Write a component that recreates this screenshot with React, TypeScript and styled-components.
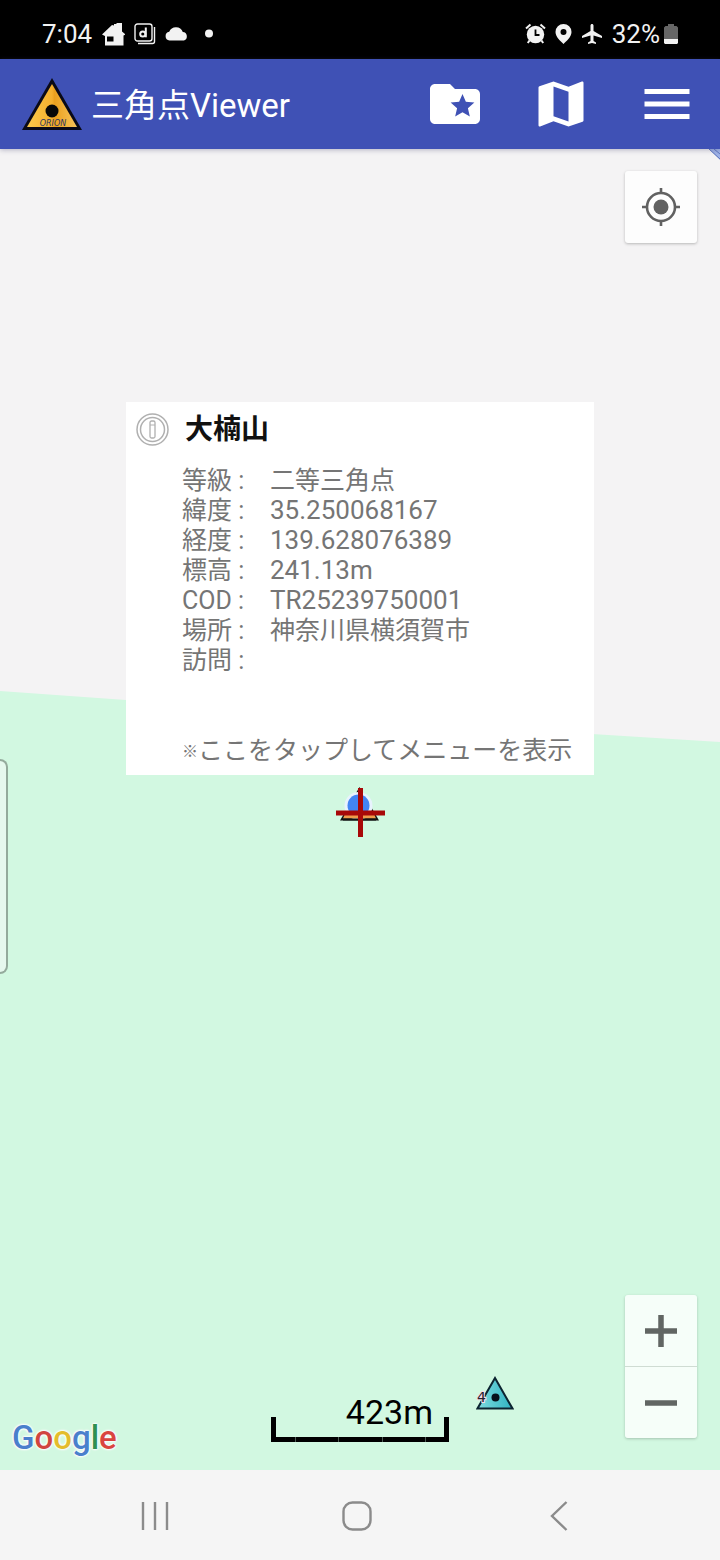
import React from "react";
import styled, { createGlobalStyle } from "styled-components";

const GlobalStyle = createGlobalStyle`
  * { box-sizing: border-box; }
  body {
    margin: 0;
    background: #f5f5f5;
    font-family: Roboto, "Noto Sans CJK JP", sans-serif;
  }
  button {
    margin: 0;
    padding: 0;
    border: 0;
    background: none;
    font: inherit;
    cursor: pointer;
  }
  svg { display: block; flex: none; }
`;

const Screen = styled.div`
  display: flex;
  flex-direction: column;
  min-height: 100vh;
`;

const StatusBar = styled.div`
  display: flex;
  align-items: center;
  justify-content: space-between;
  height: 59px;
  padding: 8px 42px 0 42px;
  background: #000;
  color: #f2f2f2;
  font-size: 26px;
  line-height: 30px;
`;

const StatusGroup = styled.div`
  display: flex;
  align-items: center;
  gap: 9px;
`;

const BatteryGroup = styled.span`
  display: flex;
  align-items: center;
  gap: 4px;
`;

const AppBar = styled.header`
  position: relative;
  z-index: 1;
  display: flex;
  align-items: center;
  height: 90px;
  padding: 0 23px 0 22px;
  background: #3f51b5;
  color: #fff;
  box-shadow: 0 1px 5px rgba(60, 60, 110, 0.35);
`;

const AppTitle = styled.h1`
  margin: 0 0 0 8px;
  padding-top: 4px;
  flex: 1;
  font-size: 33px;
  font-weight: 400;
  line-height: 40px;
  white-space: nowrap;
`;

const Actions = styled.div`
  display: flex;
  gap: 46px;
`;

const MapArea = styled.main`
  position: relative;
  flex: 1;
  min-height: 900px;
  overflow: hidden;
  background: #f5f5f5;
`;

const Terrain = styled.svg`
  position: absolute;
  inset: 0;
  width: 100%;
  height: 100%;
`;

const CornerRibbon = styled.svg`
  position: absolute;
  top: 0;
  right: 0;
`;

const MapPin = styled.div<{ $x: string; $y: string }>`
  position: absolute;
  left: ${(p) => p.$x};
  top: ${(p) => p.$y};
  transform: translate(-50%, -50%);
`;

const InfoWindow = styled.section`
  position: absolute;
  left: 50%;
  bottom: calc(50% + 35px);
  transform: translateX(-50%);
  width: 468px;
  padding: 8px 10px 9px;
  background: #fff;
  color: #757575;
  font-size: 25px;
  line-height: 30px;
  cursor: pointer;
`;

const InfoHeader = styled.div`
  display: flex;
  align-items: center;
  gap: 16px;
  height: 40px;
  margin-bottom: 16px;
`;

const InfoTitle = styled.h2`
  margin: 0;
  color: #111;
  font-size: 28px;
  font-weight: 700;
  line-height: 40px;
`;

const InfoList = styled.dl`
  display: grid;
  grid-template-columns: 88px 1fr;
  grid-auto-rows: 30px;
  margin: 0 0 60px 46px;
`;

const InfoLabel = styled.dt`
  white-space: nowrap;
`;

const InfoValue = styled.dd<{ $numeric?: boolean }>`
  margin: 0;
  font-size: ${(p) => (p.$numeric ? 26 : 25)}px;
  line-height: ${(p) => (p.$numeric ? 28 : 30)}px;
  white-space: nowrap;
`;

const InfoHint = styled.p`
  margin: 0 0 0 46px;
  white-space: nowrap;
  height: 30px;
`;

const NoteMark = styled.span`
  font-size: 16px;
  vertical-align: 2px;
  line-height: 1;
`;

const MapButton = styled.button`
  display: grid;
  place-items: center;
  width: 72px;
  height: 72px;
  color: #666;
`;

const LocateButton = styled(MapButton)`
  position: absolute;
  top: 22px;
  right: 23px;
  border-radius: 3px;
  background: #fdfdfd;
  box-shadow: 0 1px 3px rgba(0, 0, 0, 0.25);
`;

const ZoomControls = styled.div`
  position: absolute;
  right: 23px;
  bottom: 32px;
  border-radius: 3px;
  background: rgba(255, 255, 255, 0.8);
  box-shadow: 0 1px 3px rgba(0, 0, 0, 0.22);

  button {
    height: 71px;
  }

  button + button {
    height: 72px;
    border-top: 1px solid #cfdcd3;
  }
`;

const EdgePanel = styled.button`
  position: absolute;
  left: 0;
  top: calc(50% - 51px);
  width: 8px;
  height: 215px;
  border: 2px solid #94aa9c;
  border-left: 0;
  border-radius: 0 8px 8px 0;
  background: #e6f8ee;
`;

const ScaleBar = styled.div`
  position: absolute;
  left: 50%;
  bottom: 28px;
  transform: translateX(-50%);
  width: 178px;
  color: #000;
  font-size: 34px;
  line-height: 40px;
`;

const ScaleText = styled.div`
  height: 25px;
  padding-right: 16px;
  text-align: right;
`;

const ScaleRule = styled.div`
  display: grid;
  grid-template-columns: 19px 1fr 1fr 1fr 19px;
  height: 25px;
  align-items: end;
  border: solid #000;
  border-width: 0 5px;

  span {
    height: 5px;
    background: #000;
  }

  span + span {
    border-left: 1px solid #4c5a51;
  }
`;

const Attribution = styled.a`
  position: absolute;
  left: 12px;
  bottom: 12px;
  font-family: Roboto, sans-serif;
  font-size: 33px;
  font-weight: 500;
  line-height: 40px;
  text-decoration: none;
  text-shadow: 0 0 2px #fff, 0 0 2px #fff, 0 0 3px #fff, 0 0 3px #fff;
`;

const Letter = styled.span<{ $color: string }>`
  color: ${(p) => p.$color};
`;

const NavBar = styled.nav`
  display: grid;
  grid-template-columns: repeat(3, 1fr);
  height: 90px;
  padding: 2px 60px 0 54px;
  background: #f5f5f5;
`;

const NavButton = styled.button`
  display: grid;
  place-items: center;
`;

const rows: { label: string; value: string; numeric?: boolean }[] = [
  { label: "等級", value: "二等三角点" },
  { label: "緯度", value: "35.250068167", numeric: true },
  { label: "経度", value: "139.628076389", numeric: true },
  { label: "標高", value: "241.13m", numeric: true },
  { label: "COD", value: "TR25239750001", numeric: true },
  { label: "場所", value: "神奈川県横須賀市" },
  { label: "訪問", value: "" },
];

const googleLetters: [string, string][] = [
  ["G", "#4a80cc"],
  ["o", "#d0453f"],
  ["o", "#e3bd2c"],
  ["g", "#4a80cc"],
  ["l", "#2f9150"],
  ["e", "#d9453f"],
];

const actions = [
  {
    name: "お気に入りフォルダ",
    path: "M20 6h-8l-2-2H4c-1.1 0-2 .9-2 2v12c0 1.1.9 2 2 2h16c1.1 0 2-.9 2-2V8c0-1.1-.9-2-2-2zm-2.06 11L15 15.28 12.06 17l.78-3.33-2.59-2.24 3.41-.29L15 8l1.34 3.14 3.41.29-2.59 2.24.78 3.33z",
  },
  {
    name: "地図",
    path: "M20.5 3l-.16.03L15 5.1 9 3 3.36 4.9c-.21.07-.36.25-.36.48V20.5c0 .28.22.5.5.5l.16-.03L9 18.9l6 2.1 5.64-1.9c.21-.07.36-.25.36-.48V3.5c0-.28-.22-.5-.5-.5zM15 19l-6-2.11V5l6 2.11V19z",
  },
  { name: "メニュー", path: "M3 18h18v-2H3v2zm0-5h18v-2H3v2zm0-7v2h18V6H3z" },
];

function StatusIcons() {
  return (
    <>
      <svg width="24" height="24" viewBox="0 0 24 24" fill="#f2f2f2">
        <path
          fillRule="evenodd"
          d="M1 12.500 11 3l2 .5V2h2.500V1H21v8.500l3.500 3-2 1V23.500H4V14zM6 14.500v5h6.500v-5z"
        />
      </svg>
      <svg width="22" height="22" viewBox="0 0 22 22" fill="none" stroke="#f2f2f2">
        <rect x="1" y="1" width="17" height="17" rx="2.500" strokeWidth="1.400" />
        <path d="M20.500 4v14.500a2 2 0 0 1-2 2H4" strokeWidth="1.400" />
        <circle cx="8.800" cy="11" r="2.600" strokeWidth="2" />
        <path d="M11.800 4.500v9.800" strokeWidth="2" />
      </svg>
      <svg width="24" height="14" viewBox="0 0 24 14" fill="#f2f2f2">
        <path d="M4.500 13.500a4.400 4.400 0 0 1-.3-8.700 7.300 7.300 0 0 1 13.600.2 4.400 4.400 0 0 1 1.200 8.500z" />
      </svg>
      <svg width="28" height="10" viewBox="0 0 28 10" fill="#f2f2f2">
        <circle cx="11" cy="4.500" r="4" />
      </svg>
    </>
  );
}

function TriangleLogo() {
  return (
    <svg width="61" height="54" viewBox="0 0 61 54" role="img" aria-label="ORION">
      <defs>
        <linearGradient id="gold" x1="0" x2="1">
          <stop offset="0" stopColor="#fbc94d" />
          <stop offset="0.5" stopColor="#f5b02e" />
          <stop offset="0.55" stopColor="#eba01e" />
          <stop offset="1" stopColor="#f7c45a" />
        </linearGradient>
      </defs>
      <path d="M30 1 60 53H0z" fill="#0a0a18" />
      <path d="M30 7 55 50H5z" fill="url(#gold)" />
      <circle cx="30" cy="34" r="6.500" fill="#080808" />
      <text
        x="31"
        y="49"
        textAnchor="middle"
        fontFamily="DejaVu Sans, sans-serif"
        fontStyle="italic"
        fontSize="8"
        fill="#2c365f"
      >
        ORION
      </text>
    </svg>
  );
}

export default function App() {
  return (
    <Screen>
      <GlobalStyle />
      <StatusBar>
        <StatusGroup>
          <span>7:04</span>
          <StatusIcons />
        </StatusGroup>
        <StatusGroup>
          <svg width="21" height="21" viewBox="0 0 21 21">
            <circle cx="10.500" cy="11.500" r="8.700" fill="#f2f2f2" />
            <path
              d="M1 5.500 5.500 1.500M20 5.500l-4.500-4M4.500 17.500 2.800 20M16.500 17.500l1.700 2.500"
              stroke="#f2f2f2"
              strokeWidth="2"
            />
            <path d="M10.500 6.500v5.500h4" fill="none" stroke="#000" strokeWidth="1.800" />
          </svg>
          <svg width="17" height="20" viewBox="0 0 17 20" fill="#f2f2f2">
            <path
              fillRule="evenodd"
              d="M8.500 0a8 8 0 0 1 8 8c0 5-5 9-8 12C5.500 17 .5 13 .5 8a8 8 0 0 1 8-8zm0 5a3 3 0 1 0 0 6 3 3 0 0 0 0-6z"
            />
          </svg>
          <svg width="22" height="22" viewBox="1 1 22 22" fill="#f2f2f2">
            <path d="M22 16v-2l-8.500-5V3.500c0-.83-.67-1.500-1.500-1.500s-1.500.67-1.500 1.500V9L2 14v2l8.500-2.500V19L8 20.500V22l4-1 4 1v-1.500L13.500 19v-5.500L22 16z" />
          </svg>
          <BatteryGroup>
            32%
            <svg width="14" height="20" viewBox="0 0 14 20">
              <path d="M4 0h6v2h2.500L14 3.500V15H0V3.500L1.500 2H4z" fill="#666" />
              <path d="M0 15h14v4l-1 1H1l-1-1z" fill="#f2f2f2" />
            </svg>
          </BatteryGroup>
        </StatusGroup>
      </StatusBar>

      <AppBar>
        <TriangleLogo />
        <AppTitle>三角点Viewer</AppTitle>
        <Actions>
          {actions.map((a) => (
            <button key={a.name} type="button" aria-label={a.name}>
              <svg width="60" height="60" viewBox="0 0 24 24" fill="#fff">
                <path d={a.path} />
              </svg>
            </button>
          ))}
        </Actions>
      </AppBar>

      <MapArea>
        <Terrain viewBox="0 0 720 1321" preserveAspectRatio="none" aria-hidden="true">
          <rect width="720" height="1321" fill="#f4f3f4" />
          <path d="M0 542 126 551 592 585 720 593V1321H0z" fill="#d2f8e1" />
        </Terrain>
        <CornerRibbon width="11" height="11" viewBox="0 0 11 11" aria-hidden="true">
          <path d="M0 0H11V11z" fill="#9fb2e6" />
          <path d="M0 0 11 10M5 0 11 5" stroke="#5f77bd" />
        </CornerRibbon>

        <LocateButton type="button" aria-label="現在地">
          <svg width="40" height="40" viewBox="0 0 40 40" fill="none" stroke="#616161">
            <circle cx="20" cy="20" r="14" strokeWidth="2.600" />
            <path d="M20 1v6M20 33v6M1 20h6M33 20h6" strokeWidth="2.600" />
            <circle cx="20" cy="20" r="7.500" fill="#616161" stroke="none" />
          </svg>
        </LocateButton>

        <EdgePanel type="button" aria-label="エッジパネル" />

        <InfoWindow>
          <InfoHeader>
            <svg width="33" height="33" viewBox="0 0 33 33" fill="none" stroke="#b0b0b0">
              <circle cx="16.500" cy="16.500" r="15.500" strokeWidth="1.500" />
              <circle cx="16.500" cy="16.500" r="12" strokeWidth="1.500" />
              <rect x="14" y="8" width="5" height="17" rx="1.500" strokeWidth="1.300" />
              <path d="M14 12h5" />
            </svg>
            <InfoTitle>大楠山</InfoTitle>
          </InfoHeader>
          <InfoList>
            {rows.map((r) => (
              <React.Fragment key={r.label}>
                <InfoLabel>{r.label} :</InfoLabel>
                <InfoValue $numeric={r.numeric}>{r.value}</InfoValue>
              </React.Fragment>
            ))}
          </InfoList>
          <InfoHint>
            <NoteMark>※</NoteMark>ここをタップしてメニューを表示
          </InfoHint>
        </InfoWindow>

        <MapPin $x="50%" $y="50%">
          <svg width="50" height="54" viewBox="0 0 50 54">
            <path d="M24.500 4 44 37.500H5z" fill="#111" />
            <path d="M24.500 9 39 34.500H10z" fill="#ef9a4a" />
            <circle cx="23.500" cy="23" r="14" fill="#e8f3fd" />
            <circle cx="23.500" cy="22.500" r="11" fill="#4285f4" />
            <path d="M9.500 32h30l1.500 3.500H8z" fill="#ef9a4a" />
            <path d="M8 36.500h33" stroke="#111" strokeWidth="2" />
            <path d="M25.500 5v49M1 30h49" stroke="#a80808" strokeWidth="5" />
          </svg>
        </MapPin>

        <MapPin $x="68.750%" $y="94.200%">
          <svg width="38" height="34" viewBox="0 0 38 34">
            <defs>
              <linearGradient id="teal" x1="0" x2="1">
                <stop offset="0" stopColor="#7fdce0" />
                <stop offset="1" stopColor="#2fb3c0" />
              </linearGradient>
            </defs>
            <path d="M19 2 36.500 32.500H1.500z" fill="url(#teal)" stroke="#0c2430" strokeWidth="2" />
            <circle cx="19.500" cy="21.500" r="4" fill="#06101c" />
            <text
              x="1"
              y="26"
              fontFamily="DejaVu Sans, sans-serif"
              fontSize="14"
              fill="#26202c"
              stroke="#f4dfe6"
              strokeWidth="2"
              paintOrder="stroke"
            >
              4
            </text>
          </svg>
        </MapPin>

        <ScaleBar>
          <ScaleText>423m</ScaleText>
          <ScaleRule>
            <span />
            <span />
            <span />
            <span />
            <span />
          </ScaleRule>
        </ScaleBar>

        <Attribution href="#google" aria-label="Google">
          {googleLetters.map(([char, color], i) => (
            <Letter key={i} $color={color}>
              {char}
            </Letter>
          ))}
        </Attribution>

        <ZoomControls>
          <MapButton type="button" aria-label="拡大">
            <svg width="32" height="32" viewBox="0 0 32 32" stroke="#616663" strokeWidth="5.500">
              <path d="M16 0v32M0 16h32" />
            </svg>
          </MapButton>
          <MapButton type="button" aria-label="縮小">
            <svg width="32" height="32" viewBox="0 0 32 32" stroke="#616663" strokeWidth="5.500">
              <path d="M0 16h32" />
            </svg>
          </MapButton>
        </ZoomControls>
      </MapArea>

      <NavBar>
        <NavButton type="button" aria-label="履歴">
          <svg width="28" height="30" viewBox="0 0 28 30" stroke="#8b8b8b" strokeWidth="2.400">
            <path d="M2 1v28M14 1v28M26 1v28" />
          </svg>
        </NavButton>
        <NavButton type="button" aria-label="ホーム">
          <svg width="30" height="30" viewBox="0 0 30 30" fill="none" stroke="#8b8b8b">
            <rect x="1.500" y="1.500" width="27" height="27" rx="9" strokeWidth="2.400" />
          </svg>
        </NavButton>
        <NavButton type="button" aria-label="戻る">
          <svg width="18" height="30" viewBox="0 0 18 30" fill="none" stroke="#8b8b8b">
            <path d="M16.500 1 2 15l14.500 14" strokeWidth="2.400" />
          </svg>
        </NavButton>
      </NavBar>
    </Screen>
  );
}
